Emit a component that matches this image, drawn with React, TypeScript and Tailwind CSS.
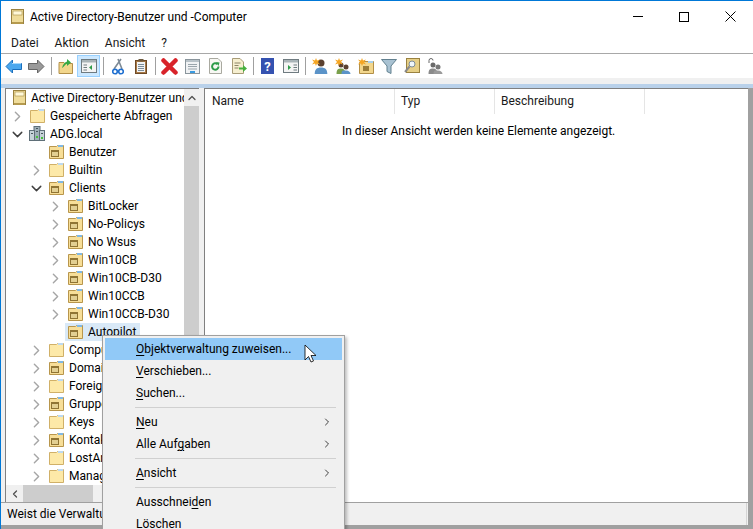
import { ChevronDown, ChevronLeft, ChevronRight, ChevronUp } from 'lucide-react';

const font = { fontFamily: 'Roboto, "Noto Sans", sans-serif' };

function PlainFolder() {
  return (
    <svg width="16" height="16" viewBox="0 0 16 16" className="shrink-0">
      <path d="M1.5 2.5V14.5H15.5V1.5H9.5L8.5 2.5Z" fill="#fde9a8" stroke="#d0b068" />
      <rect x="10" y="1" width="5" height="2" fill="#bcd9f2" />
    </svg>
  );
}

function OuFolder() {
  return (
    <svg width="16" height="16" viewBox="0 0 16 16" className="shrink-0">
      <path d="M1.5 2.5V14.5H15.5V1.5H9.5L8.5 2.5Z" fill="#f7de98" stroke="#b8964c" />
      <rect x="10" y="1" width="5" height="2" fill="#7fb8e6" />
      <rect x="3" y="6" width="8" height="7" fill="#8f7434" />
      <rect x="4" y="8" width="6" height="4" fill="#e2cf92" />
    </svg>
  );
}

function RootBook() {
  return (
    <svg width="16" height="16" viewBox="0 0 16 16" className="shrink-0">
      <rect x="1.5" y="0.5" width="12" height="14" fill="#efdc9a" stroke="#9a8240" />
      <rect x="3" y="2" width="9" height="4" fill="#fff8d8" stroke="#a58c48" strokeWidth="0.6" />
      <rect x="2" y="13" width="11" height="2" fill="#b59a4e" />
    </svg>
  );
}

function DomainIcon() {
  return (
    <svg width="16" height="16" viewBox="0 0 16 16" className="shrink-0">
      <rect x="5" y="0.5" width="6" height="14" fill="#9fb0b8" stroke="#5f6f78" />
      <rect x="0.5" y="4.5" width="5" height="10" fill="#c5d2d8" stroke="#5f6f78" />
      <rect x="10.5" y="4.5" width="5" height="10" fill="#c5d2d8" stroke="#5f6f78" />
      <rect x="7" y="2" width="2" height="1" fill="#48565e" />
      <rect x="7" y="5" width="2" height="1" fill="#48565e" />
      <rect x="7" y="10" width="2" height="2" fill="#46c03c" />
      <rect x="2" y="7" width="2" height="1" fill="#48565e" />
      <rect x="12" y="7" width="2" height="1" fill="#48565e" />
      <rect x="12" y="11" width="2" height="2" fill="#46c03c" />
    </svg>
  );
}

function ToolIcon({ name }: { name: string }) {
  const person = (x: number, y: number, r: number, head: string, c: string) => (
    <>
      <path d={`M${x - r * 1.8} 16c0-4.5 ${r * 0.6}-${16 - y - r - 1} ${r * 1.8}-${16 - y - r - 1}s${r * 1.8} 2 ${r * 1.8} ${16 - y - r - 1}z`} fill={c} />
      <circle cx={x} cy={y} r={r} fill={head} />
    </>
  );
  const star = <path d="M4 0l1 2.5L8 1.5 6 4l2 2.5L5 5.5 4 8 3 5.5 0 6.5 2 4 0 1.5 3 2.5z" fill="#f5a623" />;
  switch (name) {
    case 'back':
      return (
        <svg width="17" height="15" viewBox="0 0 17 15">
          <path d="M7.5 1L1 7.5 7.5 14V10.5h9v-6h-9z" fill="#4ba8ee" stroke="#1a6fbd" />
          <path d="M7 4.5h9" stroke="#a8d8f8" />
        </svg>
      );
    case 'forward':
      return (
        <svg width="17" height="15" viewBox="0 0 17 15">
          <path d="M9.5 1L16 7.5 9.5 14V10.5h-9v-6h9z" fill="#9a9a9a" stroke="#666" />
        </svg>
      );
    case 'up':
      return (
        <svg width="15" height="16" viewBox="0 0 15 16">
          <path d="M1 5.5V15.5H14.5V5.5H7L6 4.5H1Z" fill="#f2d68c" stroke="#b28f48" />
          <path d="M4 10c1-4 3-6 5-6.500V1l4 3.500-4 3.500V5.500C7 6.500 6 9 4 10z" fill="#35a845" />
        </svg>
      );
    case 'tree':
      return (
        <svg width="16" height="14" viewBox="0 0 16 14">
          <rect x="0.5" y="0.5" width="15" height="13" fill="#f4f4f4" stroke="#6f7b80" />
          <rect x="1" y="1" width="14" height="2.5" fill="#a9b4b8" />
          <path d="M11 6v5L8 8.500z" fill="#2f9c4a" />
          <path d="M2.500 6H6M2.500 8.500H6M2.500 11H6" stroke="#6f7b80" />
        </svg>
      );
    case 'cut':
      return (
        <svg width="12" height="17" viewBox="0 0 12 17">
          <path d="M2 11L9 1M10 11L6 1" stroke="#7d8a96" strokeWidth="1.6" />
          <circle cx="3" cy="13.500" r="2.300" fill="none" stroke="#1f6fd0" strokeWidth="1.6" />
          <circle cx="9" cy="13.500" r="2.300" fill="none" stroke="#1f6fd0" strokeWidth="1.6" />
        </svg>
      );
    case 'paste':
      return (
        <svg width="12" height="15" viewBox="0 0 12 15">
          <rect x="0.5" y="1.5" width="11" height="13" fill="#a87a48" stroke="#6e4a26" />
          <rect x="2" y="3" width="8" height="10" fill="#f2f4f6" />
          <path d="M3 5.500h6M3 7.500h6M3 9.500h6M3 11.500h6" stroke="#7c8c98" />
          <rect x="3.500" y="0" width="5" height="2.500" fill="#6e5a3e" />
        </svg>
      );
    case 'delete':
      return (
        <svg width="17" height="17" viewBox="0 0 17 17">
          <path d="M2.500 2.500l12 12M14.500 2.500l-12 12" stroke="#d8232a" strokeWidth="4.5" strokeLinecap="round" />
        </svg>
      );
    case 'props':
      return (
        <svg width="15" height="15" viewBox="0 0 15 15">
          <rect x="0.5" y="0.5" width="14" height="14" fill="#f0f2f4" stroke="#8a959c" />
          <rect x="1" y="1" width="13" height="2" fill="#b8c2c8" />
          <path d="M3 5.500h9M3 7.500h9" stroke="#9aa5ac" />
          <path d="M3 10h9" stroke="#9aa5ac" />
          <path d="M5 13h5" stroke="#3a9ae0" strokeWidth="2" />
        </svg>
      );
    case 'refresh':
      return (
        <svg width="15" height="16" viewBox="0 0 15 16">
          <path d="M1.500 0.500H10L13.500 4V15.500H1.500Z" fill="#f8f8f4" stroke="#a9a9a0" />
          <path d="M10.500 8.500a3.200 3.200 0 1 1-1-2.300" fill="none" stroke="#2f9c4a" strokeWidth="2" />
          <path d="M8 4l3.500.500L10.500 8z" fill="#2f9c4a" />
        </svg>
      );
    case 'export':
      return (
        <svg width="16" height="16" viewBox="0 0 16 16">
          <path d="M1.500 0.500H9L12.500 4V15.500H1.500Z" fill="#f6efd0" stroke="#a89c78" />
          <path d="M3.500 5h6M3.500 7.500h4M3.500 10h4" stroke="#8c8468" />
          <path d="M8 9.500h4V7l4 3.500-4 3.500v-2.500H8z" fill="#46b03e" />
        </svg>
      );
    case 'help':
      return (
        <svg width="13" height="16" viewBox="0 0 13 16">
          <rect width="13" height="16" fill="#3552b0" />
          <text x="6.500" y="13" textAnchor="middle" fontSize="13" fontWeight="700" fill="#fff" style={font}>
            ?
          </text>
        </svg>
      );
    case 'sheet':
      return (
        <svg width="16" height="14" viewBox="0 0 16 14">
          <rect x="0.5" y="0.5" width="15" height="13" fill="#f4f4f4" stroke="#6f7b80" />
          <rect x="1" y="1" width="14" height="2.500" fill="#a9b4b8" />
          <path d="M5 6v5l3-2.500z" fill="#2f9c4a" />
          <path d="M10.500 6H14M10.500 8.500H14M10.500 11H14" stroke="#6f7b80" />
        </svg>
      );
    case 'user':
      return (
        <svg width="16" height="16" viewBox="0 0 16 16">
          {person(9, 5, 3.5, '#5a4030', '#5b93c8')}
          {star}
        </svg>
      );
    case 'group':
      return (
        <svg width="16" height="16" viewBox="0 0 16 16">
          {person(6, 7, 2.5, '#5a4030', '#7aa04c')}
          {person(11, 9, 2.5, '#5a4030', '#5b93c8')}
          {star}
        </svg>
      );
    case 'ou':
      return (
        <svg width="16" height="16" viewBox="0 0 16 16">
          <path d="M1.500 4.500V15.500H15.500V3.500H6Z" fill="#f2d68c" stroke="#b28f48" />
          <rect x="10" y="3" width="5" height="2" fill="#a8d0ee" />
          <rect x="5" y="8" width="6" height="5" fill="#9a7c38" />
          {star}
        </svg>
      );
    case 'filter':
      return (
        <svg width="16" height="15" viewBox="0 0 16 15">
          <path d="M0.500 0.500h15L10 7v7.500L6 12.500V7z" fill="#a9c2d2" stroke="#62808f" />
        </svg>
      );
    case 'find':
      return (
        <svg width="16" height="16" viewBox="0 0 16 16">
          <rect x="2.500" y="0.500" width="13" height="14" fill="#e6cf86" stroke="#9a8240" />
          <circle cx="8" cy="6" r="3" fill="#eef6fa" stroke="#7c8c98" />
          <path d="M5.500 8.500L1 14" stroke="#8a8a8a" strokeWidth="2" />
        </svg>
      );
    default:
      return (
        <svg width="16" height="16" viewBox="0 0 16 16">
          <path d="M2 5V2.500a2 2 0 0 1 4 0" fill="none" stroke="#666" />
          {person(6, 7, 2.5, '#6a6a6a', '#8a8a8a')}
          {person(11, 9, 2.5, '#777', '#9a9a9a')}
        </svg>
      );
  }
}

const toolbar: (string | null)[] = [
  'back', 'forward', null, 'up', 'tree', null, 'cut', 'paste', null, 'delete', 'props', 'refresh', 'export', null,
  'help', 'sheet', null, 'user', 'group', 'ou', 'filter', 'find', 'delegate',
];

type TreeRow = { label: string; level: number; icon: 'ou' | 'plain' | 'domain'; arrow?: 'open' | 'closed'; selected?: boolean };

const rows: TreeRow[] = [
  { label: 'Gespeicherte Abfragen', level: 1, icon: 'plain', arrow: 'closed' },
  { label: 'ADG.local', level: 1, icon: 'domain', arrow: 'open' },
  { label: 'Benutzer', level: 2, icon: 'ou' },
  { label: 'Builtin', level: 2, icon: 'plain', arrow: 'closed' },
  { label: 'Clients', level: 2, icon: 'ou', arrow: 'open' },
  { label: 'BitLocker', level: 3, icon: 'ou', arrow: 'closed' },
  { label: 'No-Policys', level: 3, icon: 'ou', arrow: 'closed' },
  { label: 'No Wsus', level: 3, icon: 'ou', arrow: 'closed' },
  { label: 'Win10CB', level: 3, icon: 'ou', arrow: 'closed' },
  { label: 'Win10CB-D30', level: 3, icon: 'ou', arrow: 'closed' },
  { label: 'Win10CCB', level: 3, icon: 'ou', arrow: 'closed' },
  { label: 'Win10CCB-D30', level: 3, icon: 'ou', arrow: 'closed' },
  { label: 'Autopilot', level: 3, icon: 'ou', selected: true },
  { label: 'Computers', level: 2, icon: 'plain', arrow: 'closed' },
  { label: 'Domain Controllers', level: 2, icon: 'ou', arrow: 'closed' },
  { label: 'ForeignSecurityPrincipals', level: 2, icon: 'plain', arrow: 'closed' },
  { label: 'Gruppen', level: 2, icon: 'ou', arrow: 'closed' },
  { label: 'Keys', level: 2, icon: 'plain', arrow: 'closed' },
  { label: 'Kontakte', level: 2, icon: 'ou', arrow: 'closed' },
  { label: 'LostAndFound', level: 2, icon: 'plain', arrow: 'closed' },
  { label: 'Managed Service Accounts', level: 2, icon: 'plain', arrow: 'closed' },
];

const indent: Record<number, string> = { 1: 'pl-[5px]', 2: 'pl-[24px]', 3: 'pl-[43px]' };

function Row({ row }: { row: TreeRow }) {
  return (
    <div className={`flex h-[18px] items-center ${indent[row.level]}`}>
      <span className="flex w-[13px] shrink-0 items-center justify-center">
        {row.arrow === 'open' && <ChevronDown size={17} strokeWidth={2} className="shrink-0 text-[#404040]" />}
        {row.arrow === 'closed' && <ChevronRight size={17} strokeWidth={2} className="shrink-0 text-[#a6a6a6]" />}
      </span>
      <span className={`ml-[3px] flex h-[18px] items-center gap-[5px] whitespace-nowrap pl-[2px] pr-[4px] ${row.selected ? 'bg-[#d9e9f7]' : ''}`}>
        {row.icon === 'plain' && <PlainFolder />}
        {row.icon === 'ou' && <OuFolder />}
        {row.icon === 'domain' && <DomainIcon />}
        <span>{row.label}</span>
      </span>
    </div>
  );
}

function MenuItem({ label, u, arrow, active }: { label: string; u: number; arrow?: boolean; active?: boolean }) {
  return (
    <div className={`flex h-[22px] shrink-0 items-center pl-[31px] pr-[9px] ${active ? 'bg-[#91c9f7]' : ''}`}>
      <span className="flex-1 whitespace-nowrap">
        {label.slice(0, u)}
        <span className="underline underline-offset-2">{label[u]}</span>
        {label.slice(u + 1)}
      </span>
      {arrow && <ChevronRight size={12} strokeWidth={2} className="text-[#404040]" />}
    </div>
  );
}

function MenuSep() {
  return <div className="ml-[30px] mr-[6px] my-[3px] h-px shrink-0 bg-[#d0d0d0]" />;
}

export default function App() {
  return (
    <div
      className="relative flex h-[529px] w-[753px] flex-col overflow-hidden border-l border-t border-[#0078d7] bg-white text-[12px] leading-[16px] text-black"
      style={font}
    >
      {/* title bar */}
      <div className="flex h-[31px] shrink-0 items-center">
        <div className="ml-[9px] mr-[4px]">
          <RootBook />
        </div>
        <span className="flex-1">Active Directory-Benutzer und -Computer</span>
        <div className="flex items-center">
          <span className="flex w-[46px] justify-center">
            <span className="h-px w-[10px] bg-black" />
          </span>
          <span className="flex w-[46px] justify-center">
            <span className="h-[10px] w-[10px] border border-black" />
          </span>
          <span className="flex w-[46px] justify-center">
            <svg width="11" height="11" viewBox="0 0 11 11">
              <path d="M0.5 0.5l10 10M10.5 0.5l-10 10" stroke="#000" />
            </svg>
          </span>
        </div>
      </div>

      {/* menu */}
      <div className="flex h-[22px] shrink-0 items-center gap-[16px] border-b border-[#a8a8a8] pl-[10px] text-[#1a1a1a]">
        <span>Datei</span>
        <span>Aktion</span>
        <span>Ansicht</span>
        <span>?</span>
      </div>

      {/* toolbar */}
      <div className="flex h-[24px] shrink-0 items-center bg-white pl-px">
        {toolbar.map((t, i) =>
          t === null ? (
            <span key={i} className="mx-[2.5px] h-[18px] w-px bg-[#a0a0a0]" />
          ) : (
            <span
              key={i}
              className={`flex h-[22px] w-[23px] items-center justify-center ${t === 'tree' ? 'border border-[#99d1ff] bg-[#cce8ff]' : ''}`}
            >
              <ToolIcon name={t} />
            </span>
          ),
        )}
      </div>
      <div className="h-[6px] shrink-0 bg-[#f0f0f0]" />
      <div className="h-[4px] shrink-0 bg-[#b9d1ea]" />

      <div className="flex min-h-0 flex-1 flex-col border-b-[4px] border-r-[5px] border-[#a0a0a0]">
        {/* panes */}
        <div className="flex min-h-0 flex-1 gap-[5px] bg-[#f0f0f0] pl-[4px]">
          <div className="flex w-[194px] shrink-0 flex-col border-l border-t border-[#808080] bg-white">
            <div className="flex min-h-0 flex-1">
              <div className="min-w-0 flex-1 overflow-hidden">
                <div className="flex h-[18px] items-center gap-[3px] whitespace-nowrap pl-[6px]">
                  <RootBook />
                  <span>Active Directory-Benutzer und -Computer</span>
                </div>
                {rows.map((r) => (
                  <Row key={r.label} row={r} />
                ))}
              </div>
              <div className="flex w-[15px] shrink-0 flex-col bg-[#f0f0f0]">
                <div className="flex h-[17px] shrink-0 items-center justify-center">
                  <ChevronUp size={12} strokeWidth={2.5} className="text-[#505050]" />
                </div>
                <div className="flex-1 bg-[#cdcdcd]" />
              </div>
            </div>
            <div className="flex h-[17px] shrink-0 items-center bg-[#f0f0f0]">
              <span className="flex w-[17px] justify-center">
                <ChevronLeft size={12} strokeWidth={2.5} className="text-[#505050]" />
              </span>
              <span className="h-full w-[70px] bg-[#cdcdcd]" />
            </div>
          </div>

          <div className="flex min-w-0 flex-1 flex-col border-l border-t border-[#808080] bg-white">
            <div className="flex h-[25px] shrink-0 items-center text-[#1a1a1a]">
              <span className="h-full w-[190px] border-r border-[#e5e5e5] pl-[7px] pt-[4px]">Name</span>
              <span className="h-full w-[100px] border-r border-[#e5e5e5] pl-[6px] pt-[4px]">Typ</span>
              <span className="h-full w-[150px] border-r border-[#e5e5e5] pl-[6px] pt-[4px]">Beschreibung</span>
            </div>
            <div className="pl-[137px] pt-[9px] whitespace-nowrap">In dieser Ansicht werden keine Elemente angezeigt.</div>
          </div>
        </div>

        {/* status bar */}
        <div className="flex h-[23px] shrink-0 items-center border-t border-[#a0a0a0] bg-[#f0f0f0] pl-[6px]">
          <span className="flex-1">Weist die Verwaltung von Objekten zu.</span>
          <span className="mr-[1px] h-full w-px bg-[#d4d4d4]" />
        </div>
      </div>

      {/* context menu */}
      <div className="absolute left-[101px] top-[334px] flex h-[210px] w-[243px] flex-col border border-[#a0a0a0] bg-[#f0f0f0] p-[2px] shadow-[2px_2px_3px_rgba(0,0,0,0.25)]">
        <MenuItem label="Objektverwaltung zuweisen..." u={0} active />
        <MenuItem label="Verschieben..." u={0} />
        <MenuItem label="Suchen..." u={0} />
        <MenuSep />
        <MenuItem label="Neu" u={0} arrow />
        <MenuItem label="Alle Aufgaben" u={8} arrow />
        <MenuSep />
        <MenuItem label="Ansicht" u={0} arrow />
        <MenuSep />
        <MenuItem label="Ausschneiden" u={9} />
        <MenuItem label="Löschen" u={0} />
      </div>

      {/* mouse pointer */}
      <svg width="14" height="20" viewBox="0 0 14 20" className="absolute left-[303px] top-[343px]">
        <path d="M1 1v15l3.5-3.5L7 18l2.5-1-2.5-5.5H12z" fill="#fff" stroke="#000" strokeWidth="0.8" />
      </svg>
    </div>
  );
}
